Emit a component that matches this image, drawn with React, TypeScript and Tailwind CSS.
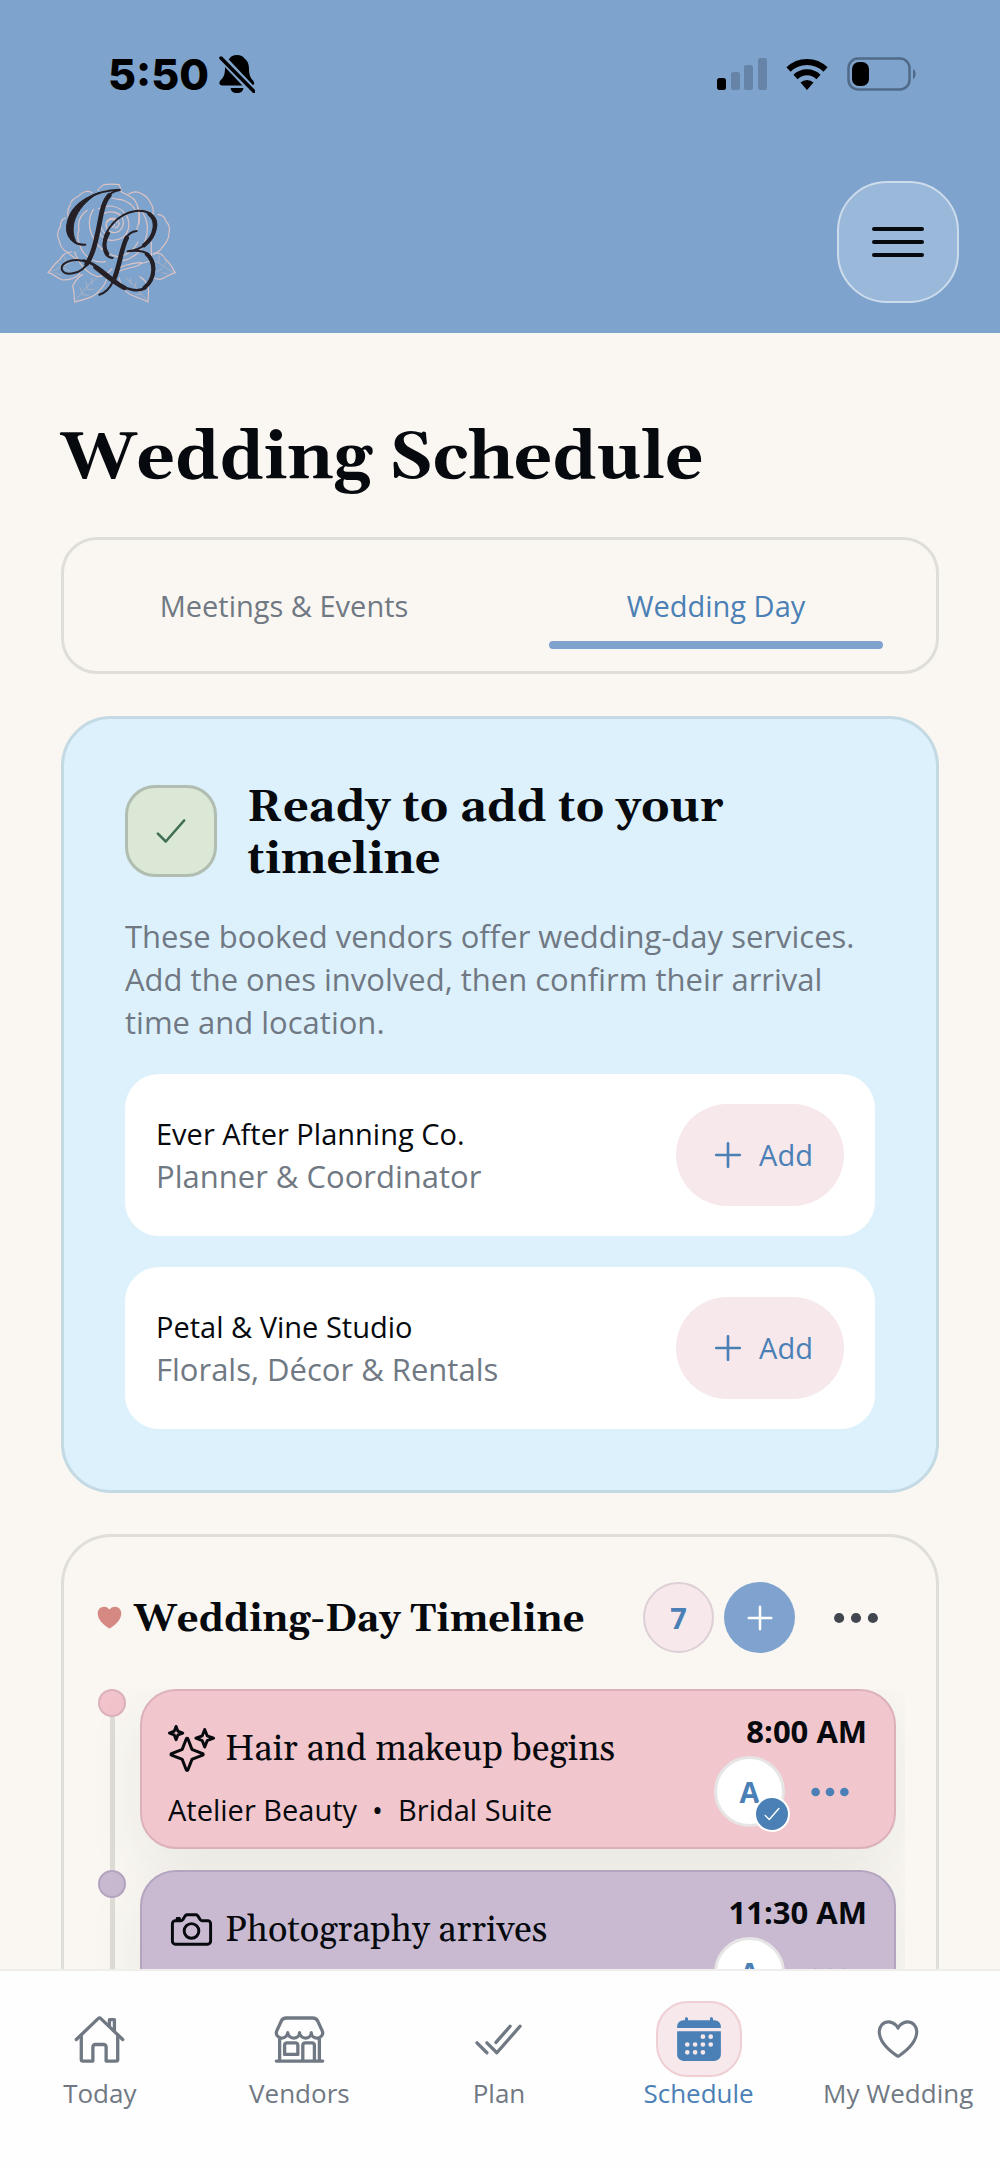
import type { ReactNode } from "react";
import {
  IoCalendar,
  IoCameraOutline,
  IoCheckmarkDoneOutline,
  IoCheckmarkOutline,
  IoAddOutline,
  IoEllipsisHorizontal,
  IoHeart,
  IoHeartOutline,
  IoHomeOutline,
  IoSparklesOutline,
  IoStorefrontOutline,
} from "react-icons/io5";

const serif = "font-[Georgia,Gelasio,'Liberation_Serif',serif]";

function StatusBar() {
  return (
    <div className="flex items-center justify-between pt-[50px] pl-[108px] pr-[82px]">
      <div className="flex items-center gap-[10px]">
        <span className="font-[Inter,sans-serif] text-[43px] leading-[48px] font-extrabold text-black">5:50</span>
        <svg className="h-[38px] w-[36px]" viewBox="0 0 36 38" aria-label="Silent mode">
          <path
            d="M18 0c4 0 6 1.500 7.500 3.500C29 6 30 10 30 14c0 6 1.500 9 4 11.500 2 2.500 1.500 5-1.500 5h-29c-3.500 0-4-3-2-5.300C4.500 22.500 6 20 6 13c0-4 1.500-7.500 4.500-9.500C12 1.500 14 0 18 0zM11.500 33h13c-.5 3-2.500 5-6.500 5s-6-2-6.500-5z"
            fill="#000"
          />
          <path d="M0 0L36 38" stroke="#7ea3cd" strokeWidth="8" />
          <path d="M2 3L35 36.500" stroke="#000" strokeWidth="3.500" strokeLinecap="round" />
        </svg>
      </div>
      <div className="flex items-center gap-[19px]">
        <svg className="h-8 w-[50px]" viewBox="0 0 50 32" aria-label="Signal">
          <rect x="0" y="20" width="9" height="12" rx="2.500" />
          <g fill="#6584a7">
            <rect x="14" y="14" width="9" height="18" rx="2.500" />
            <rect x="27" y="7" width="9" height="25" rx="2.500" />
            <rect x="41" y="0" width="9" height="32" rx="2.500" />
          </g>
        </svg>
        <svg className="h-8 w-[42px]" viewBox="0 0 42 32" aria-label="Wi-Fi">
          <g fill="none" stroke="#000" strokeWidth="6">
            <path d="M2.500 11.500a26.500 26.500 0 0 1 37 0" />
            <path d="M9.500 19a16.500 16.500 0 0 1 23 0" />
          </g>
          <path d="M14.500 24.500a9.500 9.500 0 0 1 13 0L21 32z" />
        </svg>
        <svg className="h-[34px] w-[71px]" viewBox="0 0 71 34" aria-label="Battery">
          <rect x="1.500" y="1.500" width="61" height="31" rx="9.500" fill="none" stroke="#506a88" strokeWidth="2.500" />
          <rect x="5" y="5" width="17" height="24" rx="7" />
          <path d="M66 12c3.500 1.500 3.500 8.500 0 10z" fill="#506a88" />
        </svg>
      </div>
    </div>
  );
}

function Logo() {
  return (
    <svg className="h-40 w-[170px]" viewBox="0 0 510 480" fill="none" strokeLinecap="round" strokeLinejoin="round" aria-label="Rose monogram">
      <g stroke="#dcc3c4" strokeWidth="3.500">
        <path d="M203 86c4-10 12-12 18-18 16-2 32-2 47 0l6 22c14 6 28 12 40 24 12 20 17 46 13 72" />
        <path d="M186 92c-14-8-30-3-40 10-14 6-24 14-26 28-8 12-8 24-5 37" />
        <path d="M296 96c14-8 30-8 42 1 16 6 20 18 26 30 8 12 6 22 5 36" />
        <path d="M107 168c-14 2-15 14-16 26-12 18-10 30-3 43 3 16 12 28 24 34 12 10 20 18 36 24" />
        <path d="M384 158c16 0 22 10 25 22 12 10 10 24 8 34 0 20-10 32-22 44-4 10-14 14-26 20" />
        <path d="M172 145c-20 14-30 34-25 58-8 22 0 48 14 70 20 24 44 30 66 26" />
        <path d="M190 142c-14 22-16 52-4 78 12 30 40 58 78 64 26-4 48-18 60-44" />
        <path d="M205 140c26-14 60-10 80 14 18 22 14 56-6 72-22 14-52 12-66-6-14-22-10-54 10-66 22-10 50-2 56 20 4 20-8 36-26 38-18 0-28-14-24-30 6-14 22-18 34-8 8 10 4 22-8 24" />
        <path d="M232 180c8-12 24-10 28 2M240 190c4 8 14 6 14-2M216 162c-10 22-4 44 14 56" />
        <path d="M246 108c14 6 26 2 38 8 18 8 30 20 34 34M322 130c10 30 6 54-4 80M330 142c22 22 28 60 16 92-10 32-34 54-66 62" />
        <path d="M134 270c10 32 34 64 70 74 20-2 30-8 42-24M268 328c28-14 52-10 66-24 14-2 26-4 34-14M270 316c26-10 48-14 64-14M364 240v44" />
        <path d="M126 270c-16 0-28 6-36 22-14 10-22 24-36 40 18 2 26 18 44 22 22 0 40-6 52-20" />
        <path d="M370 274c16-4 30 4 36 18 14 10 20 24 30 40-18 4-30 16-46 20-6 0-12-1-16-3" />
        <path d="M158 338c-16 6-22 20-30 34 6 18 4 32 6 48 28-8 60-14 74-34 12-12 20-24 24-40" />
        <path d="M268 348c2 22 14 38 30 48 16 8 34 12 56 24 0-18 4-30 0-46-4-14-12-22-24-30" />
      </g>
      <g stroke="#b3b3be" strokeWidth="2.500">
        <path d="M62 328c22-6 44-20 66-30M82 300l12 12M104 286l4 18M76 332l18 8M98 316l20 12" />
        <path d="M430 330c-18-8-34-22-56-34M410 298l-6 12M388 282l-2 22M412 336l-16-4M396 320l-16 8" />
        <path d="M138 414c20-24 34-44 62-66M150 378l8 16M168 360l4 18M184 348l2 18M156 398l20 2M170 382l22 0" />
        <path d="M350 414c-20-24-36-44-62-66M334 378l-6 16M318 362l-4 16M302 350l0 16M334 398l-16 0M320 386l-20-2" />
      </g>
      <g stroke="#252026">
        <path d="M269 83C205 84 120 118 112 190c-2 34 18 60 54 58" strokeWidth="6" />
        <path d="M206 92C110 128 82 222 140 243C118 205 126 142 206 92z" fill="#252026" strokeWidth="3" />
        <path d="M269 84c-40 6-46 36-54 74c-10 56-22 108-42 144c-18 34-66 42-77 22c-6-22 28-34 60-28" strokeWidth="6" />
        <path d="M238 100c-24 24-26 78-38 124c-8 38-16 62-30 82" strokeWidth="14" />
        <path d="M160 296c40 8 72 44 108 70c22 16 54 26 78 12" strokeWidth="8" />
        <path d="M196 316c28 20 52 44 88 62" strokeWidth="13" />
        <path d="M340 380c44-24 46-102-6-112c-12-3-26-2-41 0c40-2 82-34 86-78c2-30-30-48-62-43c-54 8-98 58-96 104c1 22 10 36 27 37" strokeWidth="6" />
        <path d="M350 276c28 24 26 76-6 100M358 156c26 20 20 66-16 94M234 214c-14 26-12 48-2 62" strokeWidth="12" />
        <path d="M320 207c-36 4-42 42-52 84c-10 50-22 96-60 107" strokeWidth="6" />
        <path d="M290 228c-16 30-20 80-38 124" strokeWidth="14" />
      </g>
    </svg>
  );
}

function Vendor({ name, role }: { name: string; role: string }) {
  return (
    <li className="flex items-center justify-between rounded-[34px] bg-white px-[31px] py-[30px]">
      <div>
        <p className="text-[29px] leading-[42px] text-[#06090d]">{name}</p>
        <p className="text-[31px] leading-[42px] text-[#707983]">{role}</p>
      </div>
      <button className="flex h-[102px] w-[168px] items-center justify-center gap-[10px] rounded-full bg-[#f6e8eb] text-[29px] text-[#4b80b6]">
        <IoAddOutline className="size-[42px]" />
        Add
      </button>
    </li>
  );
}

type EventProps = {
  icon: ReactNode;
  title: string;
  place: string;
  time: string;
  dot: string;
  card: string;
};

function TimelineEvent({ icon, title, place, time, dot, card }: EventProps) {
  return (
    <li className="flex gap-[14px] pl-[3px]">
      <div className="flex w-7 shrink-0 flex-col items-center">
        <span className={`size-7 rounded-full border-2 ${dot}`} />
        <span className="w-[5px] flex-1 bg-[#dedcd6]" />
      </div>
      <div className="min-w-0 flex-1 pr-[9px] pb-[21px]">
        <article
          className={`flex h-40 justify-between rounded-[36px] border-2 pl-[26px] pr-[27px] shadow-[0_20px_60px_rgba(40,60,60,0.08)] ${card}`}
        >
          <div className="min-w-0 pt-[27px]">
            <h3 className={`flex items-center gap-[10px] text-[36px] leading-[56px] whitespace-nowrap text-[#06090d] ${serif}`}>
              {icon}
              <span className="pt-1">{title}</span>
            </h3>
            <p className="mt-3 text-[29px] leading-[40px] whitespace-pre text-[#06090d]">{place}</p>
          </div>
          <div className="flex flex-col items-end pt-[19px]">
            <time className="text-[31px] leading-[42px] font-bold text-[#06090d]">{time}</time>
            <div className="mt-1 flex items-center gap-[22px] pr-[14px]">
              <span className="relative flex size-[71px] items-center justify-center rounded-full border-[3px] border-[#e6e4e4] bg-white text-[29px] font-bold text-[#4b80b6]">
                A
                <span className="absolute -right-2 -bottom-2 flex size-9 items-center justify-center rounded-full border-2 border-white bg-[#4b80b6] text-white">
                  <IoCheckmarkOutline className="size-[22px]" />
                </span>
              </span>
              <button aria-label={`Options for ${title}`} className="text-[#4b80b6]">
                <IoEllipsisHorizontal className="size-[46px]" />
              </button>
            </div>
          </div>
        </article>
      </div>
    </li>
  );
}

function NavItem({ icon, label, active = false }: { icon: ReactNode; label: string; active?: boolean }) {
  return (
    <a
      href="#"
      aria-current={active ? "page" : undefined}
      className={`flex flex-1 flex-col items-center text-[26px] leading-[32px] whitespace-nowrap ${active ? "text-[#4b80b6]" : "text-[#707983]"}`}
    >
      <span
        className={`flex h-[76px] w-[86px] items-center justify-center rounded-[32px] ${active ? "border-2 border-[#efcfd3] bg-[#f6e8eb]" : ""}`}
      >
        {icon}
      </span>
      {label}
    </a>
  );
}

export default function App() {
  return (
    <div className="flex h-screen flex-col bg-[#faf7f2] font-['Open_Sans',sans-serif]">
      <header className="h-[333px] shrink-0 bg-[#7ea3cd]">
        <StatusBar />
        <div className="mt-[64px] flex items-center justify-between pr-[41px] pl-[30px]">
          <Logo />
          <button
            aria-label="Menu"
            className="flex size-[122px] flex-col items-center justify-center gap-[9px] rounded-[50px] border-2 border-[#cddcec] bg-[#9ab8d9]"
          >
            <span className="h-1 w-[52px] rounded-full bg-[#06090d]" />
            <span className="h-1 w-[52px] rounded-full bg-[#06090d]" />
            <span className="h-1 w-[52px] rounded-full bg-[#06090d]" />
          </button>
        </div>
      </header>

      <main className="min-h-0 flex-1 overflow-y-auto px-[61px] pt-[86px] [scrollbar-width:none]">
        <h1 className={`text-[67px] leading-[80px] font-bold text-[#06090d] ${serif}`}>Wedding Schedule</h1>

        <div role="tablist" className="mt-[38px] flex gap-[22px] rounded-[36px] border-3 border-[#dfded8] p-[15px]">
          <button role="tab" aria-selected="false" className="h-[101px] flex-1 text-[29px] text-[#707983]">
            Meetings &amp; Events
          </button>
          <button role="tab" aria-selected="true" className="relative h-[101px] flex-1 text-[29px] text-[#4b80b6]">
            Wedding Day
            <span className="absolute inset-x-[38px] bottom-[7px] h-2 rounded-full bg-[#7fa3ce]" />
          </button>
        </div>

        <section className="mt-[42px] rounded-[50px] border-3 border-[#c3d9e3] bg-[#ddf1fd] px-[61px] pt-[57px] pb-[61px]">
          <div className="flex items-center gap-[30px]">
            <span className="flex size-[92px] shrink-0 items-center justify-center rounded-[30px] border-3 border-[#b0bdb0] bg-[#dbe8d6] text-[#426e56]">
              <IoCheckmarkOutline className="size-[42px]" />
            </span>
            <h2 className={`pt-[6px] text-[45px] leading-[52px] font-bold text-[#06090d] ${serif}`}>
              Ready to add to your timeline
            </h2>
          </div>
          <p className="mt-[29px] text-[31px] leading-[43px] text-[#707983]">
            These booked vendors offer wedding-day services. Add the ones involved, then confirm their arrival time and
            location.
          </p>
          <ul className="mt-[30px] flex flex-col gap-[31px]">
            <Vendor name="Ever After Planning Co." role="Planner &amp; Coordinator" />
            <Vendor name="Petal &amp; Vine Studio" role="Florals, Décor &amp; Rentals" />
          </ul>
        </section>

        <section className="mt-[41px] rounded-t-[50px] border-3 border-b-0 border-[#dfded8] px-[31px] pt-[45px]">
          <div className="flex items-center">
            <IoHeart className="size-[29px] shrink-0 text-[#d68983]" />
            <h2 className={`ml-[10px] flex-1 pt-1 text-[38px] leading-[48px] font-bold whitespace-nowrap text-[#06090d] ${serif}`}>
              Wedding-Day Timeline
            </h2>
            <span className="flex size-[71px] items-center justify-center rounded-full border-2 border-[#dccfd5] bg-[#f6e8eb] text-[29px] font-bold text-[#4b80b6]">
              7
            </span>
            <button aria-label="Add event" className="ml-[10px] flex size-[71px] items-center justify-center rounded-full bg-[#7fa3ce] text-white">
              <IoAddOutline className="size-10" />
            </button>
            <button aria-label="Timeline options" className="mr-[22px] ml-[34px] text-[#42474f]">
              <IoEllipsisHorizontal className="size-[54px]" />
            </button>
          </div>
          <ul className="mt-9 overflow-hidden">
            <TimelineEvent
              icon={<IoSparklesOutline className="size-[47px]" />}
              title="Hair and makeup begins"
              place="Atelier Beauty  •  Bridal Suite"
              time="8:00 AM"
              dot="border-[#dcb1b8] bg-[#f0c4ca]"
              card="border-[#dcb1b8] bg-[#f1c6cc]"
            />
            <TimelineEvent
              icon={<IoCameraOutline className="size-[47px]" />}
              title="Photography arrives"
              place=""
              time="11:30 AM"
              dot="border-[#b3a4c0] bg-[#c8b8d0]"
              card="border-[#b3a4c0] bg-[#c9bad1]"
            />
          </ul>
        </section>
      </main>

      <nav className="flex h-[199px] shrink-0 border-t-2 border-[#f0eeec] bg-[#fefefe] pt-[30px] pr-[2px]">
        <NavItem icon={<IoHomeOutline className="size-[53px]" />} label="Today" />
        <NavItem icon={<IoStorefrontOutline className="size-[53px]" />} label="Vendors" />
        <NavItem icon={<IoCheckmarkDoneOutline className="size-[53px]" />} label="Plan" />
        <NavItem icon={<IoCalendar className="size-[50px]" />} label="Schedule" active />
        <NavItem icon={<IoHeartOutline className="size-[50px]" />} label="My Wedding" />
      </nav>
    </div>
  );
}
